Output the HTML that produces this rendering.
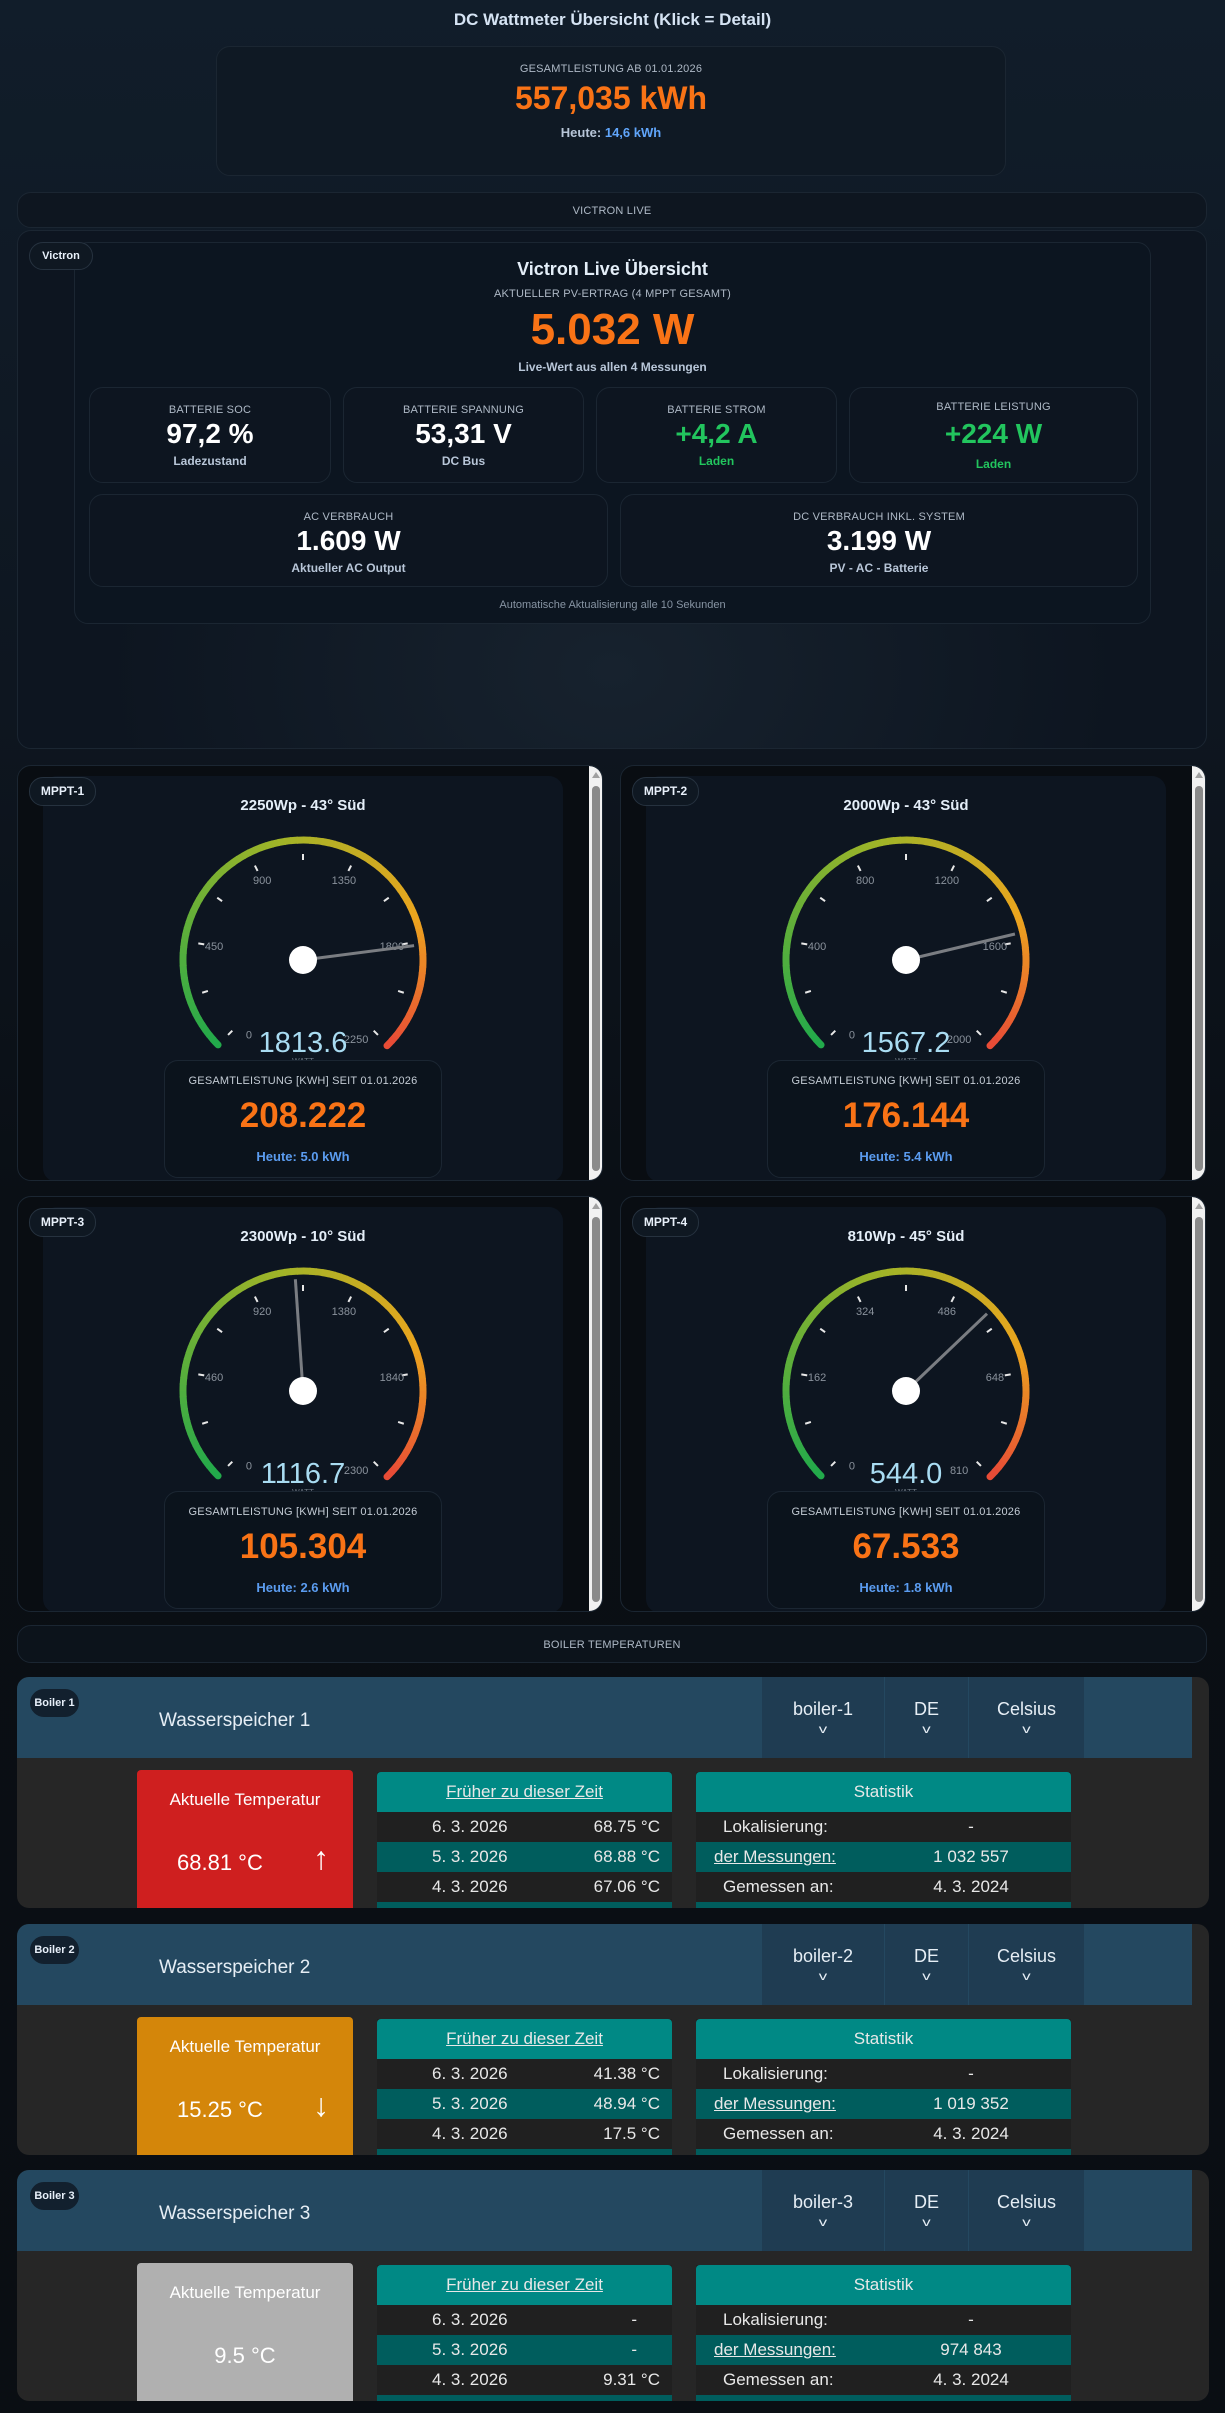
<!DOCTYPE html>
<html><head><meta charset="utf-8">
<style>
*{box-sizing:border-box;margin:0;padding:0}
body{width:1225px;height:2413px;overflow:hidden;background:linear-gradient(180deg,#111d2a 0,#0e1620 700px,#0a0f15 1200px,#0a0e13 100%);font-family:"Liberation Sans",sans-serif;color:#dbe6f2;position:relative}
.a{position:absolute}
.c{text-align:center;left:0;right:0}
.card{position:absolute;background:#0d1520;border:1px solid #1b2632;border-radius:14px}
.badge{position:absolute;background:#0f1822;border:1px solid #26323f;border-radius:14px;font-weight:bold;font-size:11px;color:#e8f0fa;text-align:center;line-height:26px;z-index:5}
.lbl{font-size:11px;color:#aeb9c6;letter-spacing:.2px}
.stat .lbl{position:absolute;top:16px;left:0;right:0;text-align:center}
.stat .v{position:absolute;top:30px;left:0;right:0;text-align:center;font-weight:bold;font-size:28px;color:#fff}
.stat .s{position:absolute;top:66px;left:0;right:0;text-align:center;font-weight:bold;font-size:12px;color:#b8c6d8}
.g{color:#22c55e!important}
.boiler{position:absolute;left:17px;width:1192px;height:231px;border-radius:12px;overflow:hidden;background:#262626}
.bh{position:absolute;left:0;top:0;width:1175px;height:81px;background:#244860}
.sel{position:absolute;top:0;height:81px;background:#1f3c52;color:#e6eef5;font-size:18px;text-align:center;padding-top:22px}
.tb{position:absolute;background:#202020;color:#e8e8e8;font-size:17px}
.tb .hd{height:40px;background:#008985;text-align:center;line-height:40px;border-radius:4px 4px 0 0}
.tb .r{height:30px;line-height:30px;position:relative}
.tb .r.t{background:#005d5d}
</style></head><body>
<div class="a c" style="top:10px;font-size:17px;font-weight:bold;color:#d5e3f3">DC Wattmeter Übersicht (Klick = Detail)</div>
<div class="card" style="left:216px;top:46px;width:790px;height:130px;background:#0f1924">
 <div class="a c lbl" style="top:16px">GESAMTLEISTUNG AB 01.01.2026</div>
 <div class="a c" style="top:33px;font-size:32px;font-weight:bold;color:#f97316">557,035 kWh</div>
 <div class="a c" style="top:78px;font-size:13px;font-weight:bold;color:#b8c6d8">Heute: <span style="color:#60a5fa">14,6 kWh</span></div>
</div>
<div class="card" style="left:17px;top:192px;width:1190px;height:36px;background:#0e1620"><div class="a c lbl" style="top:12px">VICTRON LIVE</div></div>
<div class="card" style="left:17px;top:230px;width:1190px;height:519px;background:radial-gradient(ellipse at 50% 85%,#17222e 0,#0d1520 60%)">
 <div class="card" style="left:56px;top:11px;width:1077px;height:382px;background:#0c1520">
  <div class="a c" style="top:16px;font-size:18px;font-weight:bold;color:#e4eef8">Victron Live Übersicht</div>
  <div class="a c lbl" style="top:45px">AKTUELLER PV-ERTRAG (4 MPPT GESAMT)</div>
  <div class="a c" style="top:62px;font-size:44px;font-weight:bold;color:#f97316">5.032 W</div>
  <div class="a c" style="top:117px;font-size:12px;font-weight:bold;color:#b8c6d8">Live-Wert aus allen 4 Messungen</div>
  <div class="card stat" style="left:14px;top:144px;width:242px;height:96px"><div class="lbl">BATTERIE SOC</div><div class="v">97,2 %</div><div class="s">Ladezustand</div></div>
  <div class="card stat" style="left:268px;top:144px;width:241px;height:96px"><div class="lbl">BATTERIE SPANNUNG</div><div class="v">53,31 V</div><div class="s">DC Bus</div></div>
  <div class="card stat" style="left:521px;top:144px;width:241px;height:96px"><div class="lbl">BATTERIE STROM</div><div class="v g">+4,2 A</div><div class="s g">Laden</div></div>
  <div class="card stat" style="left:774px;top:144px;width:289px;height:96px"><div class="lbl" style="top:13px">BATTERIE LEISTUNG</div><div class="v g">+224 W</div><div class="s g" style="top:69px">Laden</div></div>
  <div class="card stat" style="left:14px;top:251px;width:519px;height:93px"><div class="lbl">AC VERBRAUCH</div><div class="v">1.609 W</div><div class="s">Aktueller AC Output</div></div>
  <div class="card stat" style="left:545px;top:251px;width:518px;height:93px"><div class="lbl">DC VERBRAUCH INKL. SYSTEM</div><div class="v">3.199 W</div><div class="s">PV - AC - Batterie</div></div>
  <div class="a c" style="top:356px;font-size:11px;color:#8794a3">Automatische Aktualisierung alle 10 Sekunden</div>
 </div>
 <div class="badge" style="left:11px;top:11px;width:64px;height:28px">Victron</div>
</div>
<div id="mppt"></div>
<div class="card" style="left:17px;top:1625px;width:1190px;height:38px;background:#0c131b"><div class="a c lbl" style="top:13px">BOILER TEMPERATUREN</div></div>
<div id="boil"></div>
<script>
function polar(cx,cy,r,deg){var a=deg*Math.PI/180;return [cx+r*Math.cos(a),cy-r*Math.sin(a)];}
function lerp(a,b,t){return a.map(function(v,i){return Math.round(v+(b[i]-v)*t)})}
function col(t){var s=[[34,170,75],[160,180,40],[235,165,30],[232,72,55]];var p=[0,.45,.75,1];for(var i=0;i<3;i++){if(t<=p[i+1]){var c=lerp(s[i],s[i+1],(t-p[i])/(p[i+1]-p[i]));return 'rgb('+c+')'}}return 'rgb('+s[3]+')'}
var M=[["MPPT-1","2250Wp - 43° Süd",2250,1813.6,"1813.6","208.222","5.0",17,765],
["MPPT-2","2000Wp - 43° Süd",2000,1567.2,"1567.2","176.144","5.4",620,765],
["MPPT-3","2300Wp - 10° Süd",2300,1116.7,"1116.7","105.304","2.6",17,1196],
["MPPT-4","810Wp - 45° Süd",810,544.0,"544.0","67.533","1.8",620,1196]];
var h='';
M.forEach(function(m){
 var cx=285,cy=194,r=120,svg='';
 var N=90;for(var i=0;i<N;i++){var a1=225-270*i/N,a2=225-270*(i+1)/N-0.6;var p1=polar(cx,cy,r,a1),p2=polar(cx,cy,r,a2);
  svg+='<path d="M'+p1[0].toFixed(1)+' '+p1[1].toFixed(1)+' A'+r+' '+r+' 0 0 1 '+p2[0].toFixed(1)+' '+p2[1].toFixed(1)+'" stroke="'+col(i/N)+'" stroke-width="7" fill="none" stroke-linecap="'+(i==0||i==N-1?'round':'butt')+'"/>';}
 for(var k=0;k<=10;k++){var a=225-27*k;var q1=polar(cx,cy,100,a),q2=polar(cx,cy,106,a);svg+='<line x1="'+q1[0]+'" y1="'+q1[1]+'" x2="'+q2[0]+'" y2="'+q2[1]+'" stroke="#e8e8e8" stroke-width="2"/>';
  if(k%2==0){var l=polar(cx,cy,90,a);if(k==0)l=polar(cx,cy,92,234);if(k==10)l=polar(cx,cy,95,-56);svg+='<text x="'+l[0]+'" y="'+(l[1]+4)+'" font-size="11" fill="#8a929c" text-anchor="middle" font-family="Liberation Sans,sans-serif">'+(Math.round(m[2]*k/10))+'</text>';}}
 var va=225-270*m[3]/m[2];var n=polar(cx,cy,112,va);
 svg+='<line x1="'+cx+'" y1="'+cy+'" x2="'+n[0]+'" y2="'+n[1]+'" stroke="#7a7d82" stroke-width="3"/><circle cx="'+cx+'" cy="'+cy+'" r="14" fill="#fff"/>';
 svg+='<text x="'+cx+'" y="'+(cy+92)+'" font-size="29" fill="#a9dcf2" text-anchor="middle" font-family="Liberation Sans,sans-serif">'+m[4]+'</text><text x="'+cx+'" y="'+(cy+104)+'" font-size="8" fill="#6b7580" text-anchor="middle" font-family="Liberation Sans,sans-serif">WATT</text>';
 h+='<div class="card" style="left:'+m[7]+'px;top:'+m[8]+'px;width:586px;height:416px;background:#090d12;overflow:hidden">'+
 '<div class="a" style="left:25px;top:10px;width:520px;height:406px;background:#0d1520;border-radius:14px"></div>'+
 '<div class="a" style="left:571px;top:0;width:14px;height:416px;background:#f1f1f1;border-radius:0 14px 14px 0"><div class="a" style="left:3px;top:20px;width:8px;height:385px;background:#8a8a8a;border-radius:4px"></div><div class="a" style="left:3px;top:6px;width:0;height:0;border-left:4px solid transparent;border-right:4px solid transparent;border-bottom:6px solid #a0a0a0"></div></div>'+
 '<div class="badge" style="left:11px;top:11px;width:67px;height:29px;font-size:12px;line-height:27px">'+m[0]+'</div>'+
 '<div class="a" style="left:0;width:570px;text-align:center;top:31px;font-size:15px;font-weight:bold;color:#e4eef8">'+m[1]+'</div>'+
 '<svg class="a" style="left:0;top:0" width="570" height="310">'+svg+'</svg>'+
 '<div class="card" style="left:146px;top:294px;width:278px;height:118px;background:#0b131c"><div class="a c lbl" style="top:14px;font-size:11px;color:#c4ccd5">GESAMTLEISTUNG [KWH] SEIT 01.01.2026</div><div class="a c" style="top:35px;font-size:35px;font-weight:bold;color:#f97316">'+m[5]+'</div><div class="a c" style="top:88px;font-size:13px;font-weight:bold;color:#5b9cf0">Heute: '+m[6]+' kWh</div></div></div>';
});
document.getElementById('mppt').innerHTML=h;
var B=[["Boiler 1","Wasserspeicher 1","boiler-1","#cf1f1f","68.81 °C","↑",["68.75 °C","68.88 °C","67.06 °C"],"1 032 557",1677],
["Boiler 2","Wasserspeicher 2","boiler-2","#d4860a","15.25 °C","↓",["41.38 °C","48.94 °C","17.5 °C"],"1 019 352",1924],
["Boiler 3","Wasserspeicher 3","boiler-3","#b0b0b0","9.5 °C","",["-","-","9.31 °C"],"974 843",2170]];
var g='';
B.forEach(function(b){
 var chev='<div style="font-size:12px;margin-top:2px;transform:scaleX(1.4)">v</div>';
 var rows='',d=['6. 3. 2026','5. 3. 2026','4. 3. 2026'],st=[['Lokalisierung:','-'],['<u>der Messungen:</u>',b[7]],['Gemessen an:','4. 3. 2024']];
 var rows2='';
 for(var i=0;i<3;i++){rows+='<div class="r'+(i==1?' t':'')+'"><span class="a" style="left:55px">'+d[i]+'</span><span class="a" style="right:'+(b[6][i]=='-'?'35':'12')+'px">'+b[6][i]+'</span></div>';
  rows2+='<div class="r'+(i==1?' t':'')+'"><span class="a" style="left:'+(i==1?18:27)+'px">'+st[i][0]+'</span><span class="a" style="left:200px;width:150px;text-align:center">'+st[i][1]+'</span></div>';}
 var pad=b[5]?'left:40px;':'left:0;right:0;text-align:center;';
 g+='<div class="boiler" style="top:'+b[8]+'px"><div class="bh">'+
 '<div class="badge" style="left:13px;top:12px;width:49px;height:28px;background:#12202e;border-color:#12202e;font-size:11px">'+b[0]+'</div>'+
 '<div class="a" style="left:142px;top:33px;font-size:19px;color:#e6eef5">'+b[1]+'</div>'+
 '<div class="sel" style="left:745px;width:122px">'+b[2]+chev+'</div><div class="sel" style="left:868px;width:83px">DE'+chev+'</div><div class="sel" style="left:952px;width:115px">Celsius'+chev+'</div></div>'+
 '<div class="a" style="left:120px;top:93px;width:216px;height:150px;background:'+b[3]+';border-radius:4px;color:#fff">'+
 '<div class="a c" style="top:20px;font-size:17px">Aktuelle Temperatur</div><div class="a" style="top:80px;font-size:22px;'+pad+'">'+b[4]+'</div>'+(b[5]?'<div class="a" style="left:176px;top:70px;font-size:32px">'+b[5]+'</div>':'')+'</div>'+
 '<div class="tb" style="left:360px;top:95px;width:295px;height:150px"><div class="hd"><u>Früher zu dieser Zeit</u></div>'+rows+'<div class="r t"></div></div>'+
 '<div class="tb" style="left:679px;top:95px;width:375px;height:150px"><div class="hd">Statistik</div>'+rows2+'<div class="r t"></div></div></div>';
});
document.getElementById('boil').innerHTML=g;
</script>
</body></html>
